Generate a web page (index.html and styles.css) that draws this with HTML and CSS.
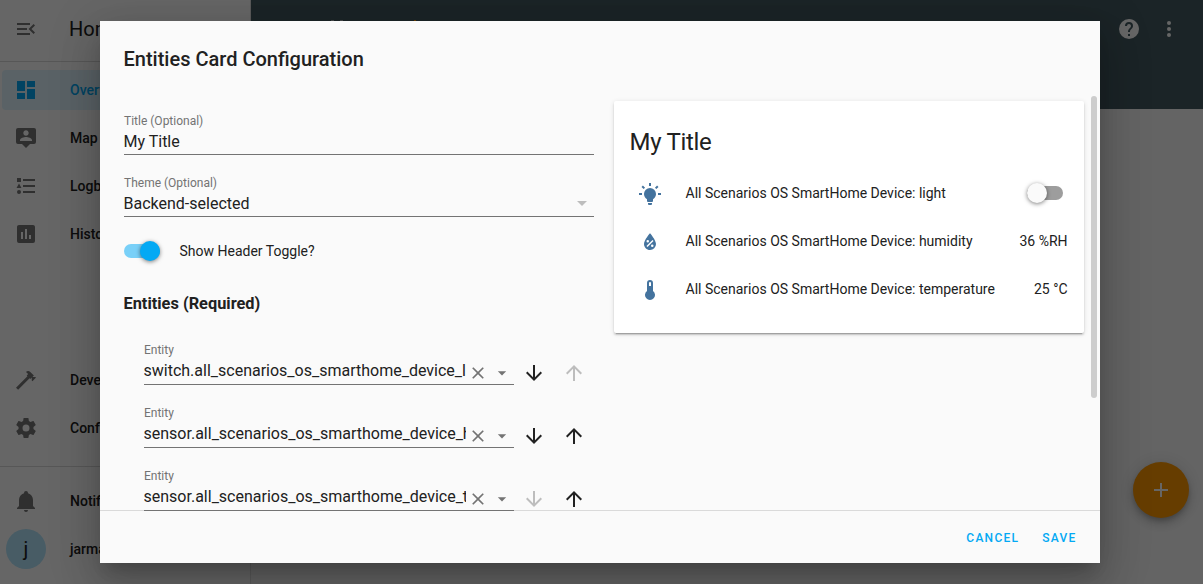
FILE: index.html
```html
<!DOCTYPE html>
<html lang="en">
<head>
<meta charset="utf-8">
<title>Home Assistant</title>
<link rel="stylesheet" href="styles.css">
</head>
<body>
<svg class="sprite" aria-hidden="true">
  <symbol id="down" viewBox="0 0 24 24"><path d="M20 12l-1.41-1.41L13 16.17V4h-2v12.17l-5.58-5.59L4 12l8 8 8-8z"/></symbol>
  <symbol id="up" viewBox="0 0 24 24"><path d="M4 12l1.41 1.41L11 7.83V20h2V7.83l5.58 5.59L20 12l-8-8-8 8z"/></symbol>
  <symbol id="close" viewBox="0 0 24 24"><path d="M19 6.41L17.59 5 12 10.59 6.41 5 5 6.41 10.59 12 5 17.59 6.41 19 12 13.41 17.59 19 19 17.59 13.41 12z"/></symbol>
  <symbol id="caret" viewBox="0 0 24 24"><path d="M7 10l5 5 5-5z"/></symbol>
</svg>

<div class="app">
  <aside class="sidebar">
    <div class="brand">
      <svg class="icon" viewBox="0 0 24 24"><path d="M21,15.61L19.59,17L14.58,12L19.59,7L21,8.39L17.44,12L21,15.61M3,6H16V8H3V6M3,13V11H13V13H3M3,18V16H16V18H3Z"/></svg>
      <span>Home Assistant</span>
    </div>
    <nav class="nav">
      <a class="item active"><svg class="icon" viewBox="0 0 24 24"><path d="M13,3V9H21V3M13,21H21V11H13M3,21H11V15H3M3,13H11V3H3V13Z"/></svg>Overview</a>
      <a class="item"><svg class="icon" viewBox="0 0 24 24"><path d="M20,2H4A2,2 0 0,0 2,4V16A2,2 0 0,0 4,18H8L12,22L16,18H20A2,2 0 0,0 22,16V4A2,2 0 0,0 20,2M12,4.3C13.5,4.3 14.7,5.5 14.7,7C14.7,8.5 13.5,9.7 12,9.7C10.5,9.7 9.3,8.5 9.3,7C9.3,5.5 10.5,4.3 12,4.3M18,15H6V14.1C6,12.1 10,11 12,11C14,11 18,12.1 18,14.1V15Z"/></svg>Map</a>
      <a class="item"><svg class="icon" viewBox="0 0 24 24"><path d="M5,9.5L7.5,14H2.5L5,9.5M3,4H7V8H3V4M5,20A2,2 0 0,0 7,18A2,2 0 0,0 5,16A2,2 0 0,0 3,18A2,2 0 0,0 5,20M9,5V7H21V5H9M9,19H21V17H9V19M9,13H21V11H9V13Z"/></svg>Logbook</a>
      <a class="item"><svg class="icon" viewBox="0 0 24 24"><path d="M9,17H7V10H9V17M13,17H11V7H13V17M17,17H15V13H17V17M19,3H5C3.89,3 3,3.89 3,5V19A2,2 0 0,0 5,21H19A2,2 0 0,0 21,19V5C21,3.89 20.1,3 19,3Z"/></svg>History</a>
      <span class="spacer"></span>
      <a class="item"><svg class="icon" viewBox="0 0 24 24"><path d="M2,19.63L13.43,8.2L12.72,7.5L14.14,6.07L12,3.89C13.2,2.7 15.09,2.7 16.27,3.89L19.87,7.5L18.45,8.91H21.29L22,9.62L18.45,13.21L17.74,12.5V9.62L16.27,11.04L15.56,10.33L4.13,21.76L2,19.63Z"/></svg>Developer Tools</a>
      <a class="item"><svg class="icon" viewBox="0 0 24 24"><path d="M12,15.5A3.5,3.5 0 0,1 8.5,12A3.5,3.5 0 0,1 12,8.5A3.5,3.5 0 0,1 15.5,12A3.5,3.5 0 0,1 12,15.5M19.43,12.97C19.47,12.65 19.5,12.33 19.5,12C19.5,11.67 19.47,11.34 19.43,11L21.54,9.37C21.73,9.22 21.78,8.95 21.66,8.73L19.66,5.27C19.54,5.05 19.27,4.96 19.05,5.05L16.56,6.05C16.04,5.66 15.5,5.32 14.87,5.07L14.5,2.42C14.46,2.18 14.25,2 14,2H10C9.75,2 9.54,2.18 9.5,2.42L9.13,5.07C8.5,5.32 7.96,5.66 7.44,6.05L4.95,5.05C4.73,4.96 4.46,5.05 4.34,5.27L2.34,8.73C2.21,8.95 2.27,9.22 2.46,9.37L4.57,11C4.53,11.34 4.5,11.67 4.5,12C4.5,12.33 4.53,12.65 4.57,12.97L2.46,14.63C2.27,14.78 2.21,15.05 2.34,15.27L4.34,18.73C4.46,18.95 4.73,19.03 4.95,18.95L7.44,17.94C7.96,18.34 8.5,18.68 9.13,18.93L9.5,21.58C9.54,21.82 9.75,22 10,22H14C14.25,22 14.46,21.82 14.5,21.58L14.87,18.93C15.5,18.67 16.04,18.34 16.56,17.94L19.05,18.95C19.27,19.03 19.54,18.95 19.66,18.73L21.66,15.27C21.78,15.05 21.73,14.78 21.54,14.63L19.43,12.97Z"/></svg>Configuration</a>
    </nav>
    <div class="account">
      <a class="item"><svg class="icon" viewBox="0 0 24 24"><path d="M21,19V20H3V19L5,17V11C5,7.9 7.03,5.17 10,4.29C10,4.19 10,4.1 10,4A2,2 0 0,1 12,2A2,2 0 0,1 14,4C14,4.1 14,4.19 14,4.29C16.97,5.17 19,7.9 19,11V17L21,19M14,21A2,2 0 0,1 12,23A2,2 0 0,1 10,21"/></svg>Notifications</a>
      <a class="item user"><span class="avatar">j</span>jarma</a>
    </div>
  </aside>
  <main class="main">
    <header class="toolbar">
      <svg class="tabs" viewBox="0 0 90 4"><path d="M0 3h3v1H0zM9 3h3v1H9z" opacity=".6"/><path class="accent" d="M83 3h2v1h-2z"/></svg>
      <svg class="icon" viewBox="0 0 24 24"><path d="M15.07,11.25L14.17,12.17C13.45,12.89 13,13.5 13,15H11V14.5C11,13.39 11.45,12.39 12.17,11.67L13.41,10.41C13.78,10.05 14,9.55 14,9C14,7.89 13.1,7 12,7A2,2 0 0,0 10,9H8A4,4 0 0,1 12,5A4,4 0 0,1 16,9C16,9.88 15.64,10.67 15.07,11.25M13,19H11V17H13M12,2A10,10 0 0,0 2,12A10,10 0 0,0 12,22A10,10 0 0,0 22,12C22,6.47 17.5,2 12,2Z"/></svg>
      <svg class="icon" viewBox="0 0 24 24"><circle cx="12" cy="6" r="2"/><circle cx="12" cy="12" r="2"/><circle cx="12" cy="18" r="2"/></svg>
    </header>
    <button class="fab"><svg class="icon" viewBox="0 0 24 24"><path d="M19 13h-6v6h-2v-6H5v-2h6V5h2v6h6v2z"/></svg></button>
  </main>
</div>

<div class="scrim">
  <section class="dialog">
    <h2 class="dialog-title">Entities Card Configuration</h2>
    <div class="content">
      <div class="editor">
        <div class="field">
          <label>Title (Optional)</label>
          <div class="value">My Title</div>
        </div>
        <div class="field">
          <label>Theme (Optional)</label>
          <div class="value"><span class="text">Backend-selected</span><svg class="icon pale"><use href="#caret"/></svg></div>
        </div>
        <div class="toggle-row"><span class="switch on"></span>Show Header Toggle?</div>
        <h3>Entities (Required)</h3>
        <div class="entities">
          <div class="entity">
            <div class="field"><label>Entity</label><div class="value"><span class="text">switch.all_scenarios_os_smarthome_device_light</span><svg class="icon small"><use href="#close"/></svg><svg class="icon small"><use href="#caret"/></svg></div></div>
            <svg class="icon arrow"><use href="#down"/></svg><svg class="icon arrow disabled"><use href="#up"/></svg>
          </div>
          <div class="entity">
            <div class="field"><label>Entity</label><div class="value"><span class="text">sensor.all_scenarios_os_smarthome_device_humidity</span><svg class="icon small"><use href="#close"/></svg><svg class="icon small"><use href="#caret"/></svg></div></div>
            <svg class="icon arrow"><use href="#down"/></svg><svg class="icon arrow"><use href="#up"/></svg>
          </div>
          <div class="entity">
            <div class="field"><label>Entity</label><div class="value"><span class="text">sensor.all_scenarios_os_smarthome_device_temperature</span><svg class="icon small"><use href="#close"/></svg><svg class="icon small"><use href="#caret"/></svg></div></div>
            <svg class="icon arrow disabled"><use href="#down"/></svg><svg class="icon arrow"><use href="#up"/></svg>
          </div>
        </div>
      </div>
      <div class="card">
        <div class="card-title">My Title</div>
        <div class="row">
          <svg class="icon" viewBox="0 0 24 24"><path d="M12,6A6,6 0 0,1 18,12C18,14.22 16.79,16.16 15,17.2V19A1,1 0 0,1 14,20H10A1,1 0 0,1 9,19V17.2C7.21,16.16 6,14.22 6,12A6,6 0 0,1 12,6M14,21V22A1,1 0 0,1 13,23H11A1,1 0 0,1 10,22V21H14M20,11H23V13H20V11M1,11H4V13H1V11M13,1V4H11V1H13M4.92,3.5L7.05,5.64L5.63,7.05L3.5,4.93L4.92,3.5M16.95,5.63L19.07,3.5L20.5,4.93L18.37,7.05L16.95,5.63Z"/></svg>
          <span class="name">All Scenarios OS SmartHome Device: light</span><span class="switch"></span>
        </div>
        <div class="row">
          <svg class="icon" viewBox="0 0 24 24"><path d="M12,3.25C12,3.25 6,10 6,14C6,17.32 8.69,20 12,20A6,6 0 0,0 18,14C18,10 12,3.25 12,3.25M14.47,9.97L15.53,11.03L9.53,17.03L8.47,15.97M9.75,10A1.25,1.25 0 0,1 11,11.25A1.25,1.25 0 0,1 9.75,12.5A1.25,1.25 0 0,1 8.5,11.25A1.25,1.25 0 0,1 9.75,10M14.25,14.5A1.25,1.25 0 0,1 15.5,15.75A1.25,1.25 0 0,1 14.25,17A1.25,1.25 0 0,1 13,15.75A1.25,1.25 0 0,1 14.25,14.5Z"/></svg>
          <span class="name">All Scenarios OS SmartHome Device: humidity</span><span>36 %RH</span>
        </div>
        <div class="row">
          <svg class="icon" viewBox="0 0 24 24"><path d="M15,13V5A3,3 0 0,0 9,5V13A5,5 0 1,0 15,13M12,4A1,1 0 0,1 13,5V8H11V5A1,1 0 0,1 12,4Z"/></svg>
          <span class="name">All Scenarios OS SmartHome Device: temperature</span><span>25 °C</span>
        </div>
      </div>
      <span class="thumb"></span>
    </div>
    <footer class="actions"><button>CANCEL</button><button>SAVE</button></footer>
  </section>
</div>
</body>
</html>
```
FILE: styles.css
```css
* { box-sizing: border-box; }
body {
  margin: 0;
  height: 584px;
  overflow: hidden;
  background: #fafafa;
  color: #212121;
  font-family: Roboto, sans-serif;
  font-size: 14px;
}
.sprite { display: none; }
.icon { width: 24px; height: 24px; flex: none; fill: currentColor; }
button { border: 0; font-family: inherit; }

.app { display: flex; height: 584px; }
.sidebar {
  display: flex;
  flex-direction: column;
  width: 251px;
  background: #fff;
  border-right: 1px solid #e0e0e0;
}
.brand {
  display: flex;
  align-items: center;
  gap: 31px;
  height: 62px;
  padding: 0 14px 4px;
  border-bottom: 1px solid #dadada;
  font-size: 20px;
}
.brand .icon { color: #757575; }
.nav { display: flex; flex-direction: column; flex: 1; gap: 8px; padding: 8px 2px 18px; }
.spacer { flex: 1; }
.item {
  display: flex;
  align-items: center;
  gap: 32px;
  height: 40px;
  padding: 0 12px;
  border-radius: 4px;
  font-weight: 500;
}
.item .icon { color: #757575; }
.item.active, .item.active .icon { color: #03a9f4; }
.item.active { background: rgba(3, 169, 244, .12); }
.account {
  display: flex;
  flex-direction: column;
  gap: 8px;
  height: 118px;
  padding: 14px 2px 0;
  border-top: 1px solid #dadada;
}
.item.user { padding-left: 4px; gap: 24px; }
.avatar {
  width: 40px;
  height: 40px;
  border-radius: 50%;
  background: #b3e5fc;
  font-size: 20px;
  font-weight: 400;
  line-height: 40px;
  text-align: center;
}
.main { position: relative; flex: 1; }
.toolbar {
  display: flex;
  justify-content: flex-end;
  gap: 16px;
  height: 109px;
  padding: 17px 22px;
  background: #455a62;
  color: #fff;
}
.tabs { width: 90px; height: 4px; margin: 0 auto 0 58px; fill: currentColor; }
.tabs .accent { fill: #ff9800; }
.fab {
  position: absolute;
  right: 14px;
  bottom: 66px;
  display: grid;
  place-items: center;
  width: 56px;
  height: 56px;
  border-radius: 50%;
  background: #ff9800;
  color: #fff;
  box-shadow: 0 3px 5px -1px rgba(0, 0, 0, .2), 0 6px 10px rgba(0, 0, 0, .14), 0 1px 18px rgba(0, 0, 0, .12);
}

.scrim {
  position: absolute;
  inset: 0;
  padding: 21px 103.5px 21px 99.5px;
  background: rgba(0, 0, 0, .6);
}
.dialog {
  display: flex;
  flex-direction: column;
  height: 542px;
  background: #fafafa;
  box-shadow: 0 11px 15px -7px rgba(0, 0, 0, .2), 0 24px 38px 3px rgba(0, 0, 0, .14), 0 9px 46px 8px rgba(0, 0, 0, .12);
}
.dialog-title {
  margin: 0;
  padding: 22px 24px 21px;
  font-size: 20px;
  font-weight: 500;
  line-height: 32px;
}
.content {
  position: relative;
  z-index: 1;
  display: flex;
  align-items: flex-start;
  gap: 20px;
  flex: none;
  height: 415px;
  padding: 5px 16px 0 24px;
  overflow: hidden;
}
.editor { width: 470px; }
.field { height: 62px; padding-top: 12px; }
.field label { display: block; padding-left: .5px; color: #737373; font-size: 12px; line-height: 16px; }
.value {
  display: flex;
  align-items: flex-start;
  height: 26px;
  border-bottom: 1px solid #737373;
  font-size: 16px;
  line-height: 25px;
}
.text { flex: 1; overflow: hidden; white-space: nowrap; }
.icon.pale { color: #bdbdbd; }
.toggle-row { display: flex; align-items: center; gap: 20px; height: 52px; }
.switch {
  position: relative;
  width: 36px;
  height: 14px;
  border-radius: 7px;
  background: #9d9d9d;
}
.switch::after {
  content: "";
  position: absolute;
  top: -3px;
  left: 0;
  width: 20px;
  height: 20px;
  border-radius: 50%;
  background: #fafafa;
  box-shadow: 0 1px 4px rgba(0, 0, 0, .5);
}
.switch.on { background: #79d0f8; }
.switch.on::after { left: 16px; background: #03a9f4; }
h3 { margin: 0; padding-top: 15px; font-size: 16.38px; font-weight: 700; line-height: 24px; }
.entities { padding: 14px 0 0 20px; }
.entity { display: flex; height: 63px; }
.entity .field { width: 370px; margin-right: 8px; }
.entity .value { height: 27px; }
.entity .text { flex: none; width: 322px; }
.small { width: 20px; height: 20px; margin: 5px 2px 0; color: #737373; }
.arrow { margin: 31px 16px 0 0; }
.arrow.disabled { color: #bdbdbd; }

.card {
  width: 470px;
  height: 232px;
  padding: 12px 16px;
  border-radius: 2px;
  background: #fff;
  box-shadow: 0 2px 2px rgba(0, 0, 0, .14), 0 1px 5px rgba(0, 0, 0, .12), 0 3px 1px -2px rgba(0, 0, 0, .2);
}
.card-title { height: 56px; font-size: 24px; letter-spacing: -.012em; line-height: 58px; }
.row { display: flex; align-items: center; height: 48px; padding-left: 8px; }
.row .icon { margin: 2px 24px 0 0; color: #44739e; }
.name { flex: 1; }
.row .switch { margin-right: 4.5px; }
.thumb {
  position: absolute;
  top: 0;
  right: 3px;
  width: 6px;
  height: 302px;
  border-radius: 3px;
  background: #cdcdcd;
}
.actions {
  display: flex;
  justify-content: flex-end;
  align-items: center;
  flex: 1;
  gap: 8px;
  margin-top: -1px;
  padding: 2px 16px 0 0;
  border-top: 1px solid #dadada;
}
.actions button {
  padding: 0 7px 0 8px;
  background: none;
  color: #03a9f4;
  font-size: 12px;
  font-weight: 500;
  letter-spacing: 1.25px;
  line-height: 36px;
}
```
